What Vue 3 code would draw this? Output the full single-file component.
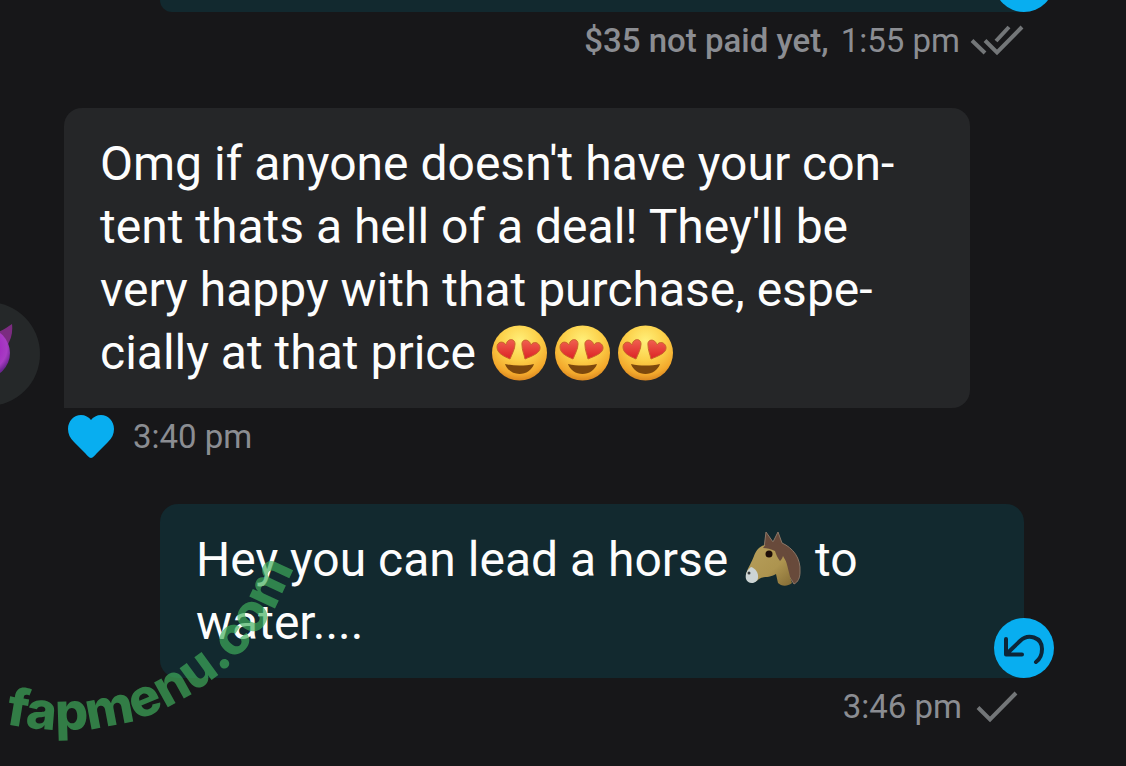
<script setup>
const incoming = [
  "Omg if anyone doesn't have your con-",
  "tent thats a hell of a deal! They'll be",
  'very happy with that purchase, espe-',
]
</script>

<template>
  <main class="chat">
    <section class="row outgoing first">
      <div class="bubble stub">
        <button class="reply" type="button" aria-label="Reply">
          <svg viewBox="0 0 60 60" aria-hidden="true"><path d="M12 21V36.500H28M13 35.500L26 23C34 15 48 19 48 31C48 37 46 41 42 44" /></svg>
        </button>
      </div>
      <p class="meta"><span><b>$35 not paid yet,</b> 1:55 pm</span>
        <svg class="ticks" viewBox="0 0 54 36" aria-hidden="true"><path d="M2 18.500L15 31M15 18.500L27 30.500L52 5M26 19L39 5" /></svg>
      </p>
    </section>

    <section class="row incoming">
      <div class="avatar" aria-hidden="true">
        <svg viewBox="0 0 104 104">
          <defs>
            <radialGradient id="imp" cx="0.5" cy="0.4" r="0.55">
              <stop offset="0.5" stop-color="#a32cc0" />
              <stop offset="0.8" stop-color="#a83cc4" />
              <stop offset="1" stop-color="#6d2592" />
            </radialGradient>
          </defs>
          <path d="M58 31C65 30 70 26 76 22C77 31 75 37 71 44Z" fill="#7b2c80" />
          <circle cx="49" cy="51" r="25" fill="url(#imp)" />
        </svg>
      </div>
      <div class="bubble">
        <p class="text">
          <span v-for="line in incoming" :key="line" class="line">{{ line }}</span>
          <span class="line">cially at that price
            <span class="faces"><svg v-for="n in 3" :key="n" class="emoji" viewBox="0 0 63 63" role="img" aria-label="Heart eyes">
              <defs>
                <radialGradient id="face" cx="0.5" cy="0.28" r="0.72">
                  <stop offset="0" stop-color="#fff07a" />
                  <stop offset="0.5" stop-color="#fccf48" />
                  <stop offset="0.85" stop-color="#f3a82c" />
                  <stop offset="1" stop-color="#d98620" />
                </radialGradient>
                <linearGradient id="eye" x1="0" y1="0" x2="0" y2="1">
                  <stop offset="0" stop-color="#f0604f" />
                  <stop offset="1" stop-color="#dc2226" />
                </linearGradient>
              </defs>
              <circle cx="31.500" cy="32" r="27.500" fill="url(#face)" />
              <path d="M22 38C15 35 9 32 9 26C9 21 15 19 18 24C19 17 27 17 27 23C27 28 24 33 22 38Z" fill="url(#eye)" stroke="#c9642a" />
              <path d="M37 38C44 35 53 32 52 26C51 21 45 20 43 24C41 17 33 18 34 24C34 29 36 33 37 38Z" fill="url(#eye)" stroke="#c9642a" />
              <path d="M17 43C26 45 37 45 46 43C44 49 38 53 31.500 53C25 53 19 49 17 43Z" fill="#7d480c" />
            </svg></span>
          </span>
        </p>
      </div>
      <p class="meta">
        <button class="like" type="button" aria-label="Liked">
          <svg viewBox="0 0 46 44" aria-hidden="true"><path d="M23 44C21 44 19 41 17 39L6 28C2 24 0 20 0 15C0 7 6 1 13 1C17 1 21 3 23 6C25 3 29 1 33 1C40 1 46 7 46 15C46 20 44 24 40 28L29 39C27 41 25 44 23 44Z" /></svg>
        </button>
        <span>3:40 pm</span>
      </p>
    </section>

    <section class="row outgoing">
      <div class="bubble">
        <p class="text">
          <span class="line">Hey you can lead a horse
            <svg class="emoji horse" viewBox="0 0 63 63" role="img" aria-label="Horse">
              <defs>
                <linearGradient id="coat" x1="0" y1="0" x2="1" y2="1">
                  <stop offset="0" stop-color="#b8a05c" />
                  <stop offset="0.6" stop-color="#ad944f" />
                  <stop offset="1" stop-color="#846b35" />
                </linearGradient>
              </defs>
              <path d="M24 20L26 4L33 14L38 4L42 15C53 20 61 30 60 44C60 50 58 54 54 56L40 34L27 20Z" fill="#684a3b" stroke="#8c7767" />
              <path d="M25 17C32 16 40 22 44 28C48 37 49 47 52 55C47 59 41 58 38 55L36 46C30 50 24 48 19 51C13 57 6 54 6 46C8 39 12 34 14 28C16 22 20 18 25 17Z" fill="url(#coat)" />
              <path d="M11 39C15 40 19 45 18 50C17 56 8 57 6 51C5 46 7 42 11 39Z" fill="#ccd4d4" />
              <path d="M23 20C26 15 31 13 35 14C44 17 50 26 51 37C47 35 45 32 43 28C42 31 41 32 40 33C37 29 36 26 35 23C31 21 27 20 23 20Z" fill="#684a3b" />
              <circle cx="29" cy="26" r="3.500" fill="#1d0d08" />
              <circle cx="9" cy="45" r="1.500" fill="#38393a" />
            </svg>
            to</span>
          <span class="line">water....</span>
        </p>
        <button class="reply" type="button" aria-label="Reply">
          <svg viewBox="0 0 60 60" aria-hidden="true"><path d="M12 21V36.500H28M13 35.500L26 23C34 15 48 19 48 31C48 37 46 41 42 44" /></svg>
        </button>
      </div>
      <p class="meta"><span>3:46 pm</span>
        <svg class="tick" viewBox="0 0 48 36" aria-hidden="true"><path d="M6 19.500L18 31.500L44 5" /></svg>
      </p>
    </section>

    <svg class="watermark" viewBox="0 0 320 226">
      <path id="arc" d="M5 184C60 195 110 190 150 175C215 148 270 100 298 14" fill="none" />
      <text><textPath href="#arc">fapmenu.com</textPath></text>
    </svg>
  </main>
</template>

<style>
body {
  margin: 0;
  background: #171719;
}
</style>

<style scoped>
.chat {
  position: relative;
  min-height: 100vh;
  box-sizing: border-box;
  overflow: hidden;
  background: #171719;
  color: #fdfdfd;
  font-family: Roboto, "Liberation Sans", sans-serif;
}
p {
  margin: 0;
}
button {
  border: 0;
  padding: 0;
  cursor: pointer;
}
svg {
  display: block;
}
.row {
  position: relative;
}
.incoming {
  margin: 40px 156px 0 64px;
}
.outgoing {
  margin: 40px 102px 0 160px;
}
.outgoing.first {
  margin-top: 0;
}
.bubble {
  position: relative;
  padding: 24px 36px;
  border-radius: 18px 18px 18px 0;
  background: #252628;
}
.outgoing .bubble {
  border-radius: 18px 18px 0 18px;
  background: #12292f;
}
.outgoing .stub {
  padding: 6px;
  border-radius: 0 0 0 12px;
}
.text {
  font-size: 48px;
  line-height: 63px;
}
.line {
  display: block;
  white-space: nowrap;
}
.faces {
  display: inline-flex;
  vertical-align: top;
}
.emoji {
  width: 63px;
  height: 63px;
}
.horse {
  display: inline-block;
  vertical-align: top;
}
.meta {
  display: flex;
  align-items: center;
  height: 56px;
  font-size: 33px;
  color: #8b8d92;
}
.outgoing .meta {
  justify-content: flex-end;
  gap: 10px;
}
.incoming .meta {
  gap: 19px;
  padding-left: 4px;
}
.meta b {
  margin-right: 4px;
  font-weight: 500;
}
.ticks {
  width: 54px;
  height: 36px;
}
.tick {
  width: 48px;
  height: 36px;
  margin-right: 4px;
}
.ticks path,
.tick path {
  fill: none;
  stroke: #737678;
  stroke-width: 4;
}
.like {
  background: none;
}
.like svg {
  width: 46px;
  height: 44px;
  overflow: visible;
  fill: #08aef0;
}
.reply {
  position: absolute;
  right: -30px;
  bottom: 0;
  width: 60px;
  height: 60px;
  border-radius: 50%;
  background: #08aef0;
}
.reply path {
  fill: none;
  stroke: #0d2638;
  stroke-width: 4;
  stroke-linecap: round;
  stroke-linejoin: round;
}
.avatar {
  position: absolute;
  left: -128px;
  bottom: 58px;
  width: 104px;
  height: 104px;
  border-radius: 50%;
  background: #252829;
}
.watermark {
  position: absolute;
  left: 0;
  bottom: 0;
  width: 320px;
  height: 226px;
  pointer-events: none;
}
.watermark text {
  font-family: Inter, "Liberation Sans", sans-serif;
  font-size: 52px;
  font-weight: 800;
  fill: #3fae5c;
  fill-opacity: 0.68;
}
</style>
